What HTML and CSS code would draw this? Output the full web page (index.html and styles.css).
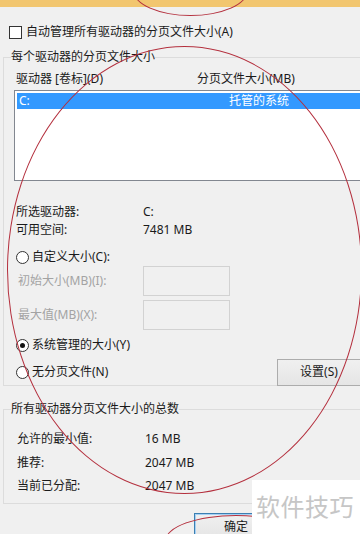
FILE: index.html
```html
<!DOCTYPE html>
<html lang="zh-CN">
<head>
<meta charset="utf-8">
<title>虚拟内存</title>
<link rel="stylesheet" href="styles.css">
</head>
<body>
<div class="titlebar"></div>
<div class="dialog">
  <label class="check-row"><span class="checkbox"></span><span>自动管理所有驱动器的分页文件大小(A)</span></label>

  <fieldset class="group group-drives">
    <legend>每个驱动器的分页文件大小</legend>
    <div class="cols"><span class="col-a">驱动器 [卷标](D)</span><span class="col-b">分页文件大小(MB)</span></div>
    <div class="listbox">
      <div class="list-row selected"><span class="col-a">C:</span><span class="col-c">托管的系统</span></div>
    </div>
    <div class="info">
      <span>所选驱动器:</span><span>C:</span>
      <span>可用空间:</span><span>7481 MB</span>
    </div>
    <div class="radio-row r-custom"><span class="radio"></span><span>自定义大小(C):</span></div>
    <div class="field-row f-init"><span class="disabled">初始大小(MB)(I):</span><span class="input"></span></div>
    <div class="field-row f-max"><span class="disabled">最大值(MB)(X):</span><span class="input"></span></div>
    <div class="radio-row r-sys"><span class="radio checked"></span><span>系统管理的大小(Y)</span></div>
    <div class="radio-row r-none"><span class="radio"></span><span class="grow">无分页文件(N)</span><button class="btn btn-set">设置(S)</button></div>
  </fieldset>

  <fieldset class="group group-total">
    <legend>所有驱动器分页文件大小的总数</legend>
    <div class="totals">
      <span>允许的最小值:</span><span>16 MB</span>
      <span>推荐:</span><span>2047 MB</span>
      <span>当前已分配:</span><span>2047 MB</span>
    </div>
  </fieldset>

  <div class="footer"><button class="btn btn-ok">确定</button></div>
</div>

<div class="mark mark-top"></div>
<div class="mark mark-big"></div>
<div class="mark mark-ok"></div>
<div class="watermark">软件技巧</div>
</body>
</html>
```

FILE: styles.css
```css
html, body {
  margin: 0;
  padding: 0;
  overflow: hidden;
  width: 360px;
  height: 534px;
}
body {
  background: #f0f0f0;
  font-family: "Noto Sans", "Noto Sans CJK SC", sans-serif;
  font-size: 12px;
  line-height: 16px;
  color: #1a1a1a;
  position: relative;
}
.titlebar {
  height: 7px;
  background: #f2c66f;
}
.dialog {
  padding-left: 3px;
  width: 360px;
  height: 527px;
  box-sizing: border-box;
  overflow: hidden;
}
.check-row {
  display: flex;
  align-items: center;
  gap: 4px;
  margin: 17px 0 0 6px;
  height: 16px;
}
.checkbox {
  width: 11px;
  height: 11px;
  border: 1px solid #333;
  background: #fff;
}
.group {
  margin: 9px 0 0 0;
  padding: 0 0 0 7px;
  border: 1px solid #dcdcdc;
  min-width: 0;
  width: 380px;
  box-sizing: border-box;
}
.group legend {
  padding: 0;
  line-height: 16px;
}
.cols {
  display: flex;
  margin: 6px 0 0 5px;
  height: 16px;
}
.col-a { width: 181px; }
.listbox {
  margin: 3px 0 0 3px;
  height: 87px;
  border: 1px solid #828790;
  background: #fff;
  padding: 2px 0 0 2px;
  box-sizing: content-box;
}
.list-row {
  display: flex;
  height: 16px;
  align-items: center;
  padding-left: 2px;
}
.list-row.selected {
  background: #3399ff;
  color: #fff;
}
.list-row .col-a { width: 210px; }
.info {
  display: grid;
  grid-template-columns: 127px auto;
  row-gap: 2px;
  margin: 23px 0 0 5px;
}
.radio-row {
  display: flex;
  align-items: center;
  gap: 3px;
  margin-left: 5px;
  height: 16px;
}
.radio {
  width: 11px;
  height: 11px;
  border: 1px solid #333;
  border-radius: 50%;
  background: #fff;
  position: relative;
  flex: none;
}
.radio.checked::after {
  content: "";
  position: absolute;
  left: 3px;
  top: 3px;
  width: 5px;
  height: 5px;
  border-radius: 50%;
  background: #111;
}
.r-custom { margin-top: 11px; }
.field-row {
  display: flex;
  align-items: center;
  margin-left: 7px;
  height: 30px;
}
.field-row .disabled {
  width: 125px;
  color: #a3a3a3;
}
.f-init { margin-top: 1px; }
.f-max { margin-top: 4px; }
.input {
  width: 85px;
  height: 28px;
  border: 1px solid #d2d2d2;
  background: #f0f0f0;
}
.r-sys { margin-top: 7px; }
.r-none {
  margin-top: 11px;
  height: 16px;
}
.grow { width: 242px; }
.btn {
  font: inherit;
  color: #1a1a1a;
  border: 1px solid #acacac;
  background: linear-gradient(#f0f0f0, #e5e5e5);
  padding: 0;
  width: 84px;
  height: 27px;
  flex: none;
}
.group-drives {
  height: 337px;
}
.group-total {
  margin-top: 15px;
}
.totals {
  display: grid;
  grid-template-columns: 128px auto;
  row-gap: 7.5px;
  margin: 14px 0 9px 6px;
}
.footer {
  padding: 9px 0 0 191px;
}
.btn-ok {
  border-color: #3c7fb1;
  box-shadow: inset 0 0 0 1px #a6d1f5;
}
.mark {
  position: absolute;
  border: 1px solid #b4303e;
  border-radius: 50%;
  pointer-events: none;
}
.mark-top { left: 133px; top: -35px; width: 113px; height: 49px; }
.mark-big { left: 7px; top: 46px; width: 353px; height: 446px; }
.mark-ok { left: 165px; top: 515px; width: 140px; height: 50px; }
.watermark {
  position: absolute;
  left: 252px;
  top: 480px;
  width: 108px;
  height: 54px;
  background: #fff;
  color: #c6c6c6;
  font-family: "Noto Sans CJK SC", sans-serif;
  font-size: 24px;
  line-height: 52px;
  padding-left: 4px;
  box-sizing: border-box;
  letter-spacing: 0.5px;
}
```
